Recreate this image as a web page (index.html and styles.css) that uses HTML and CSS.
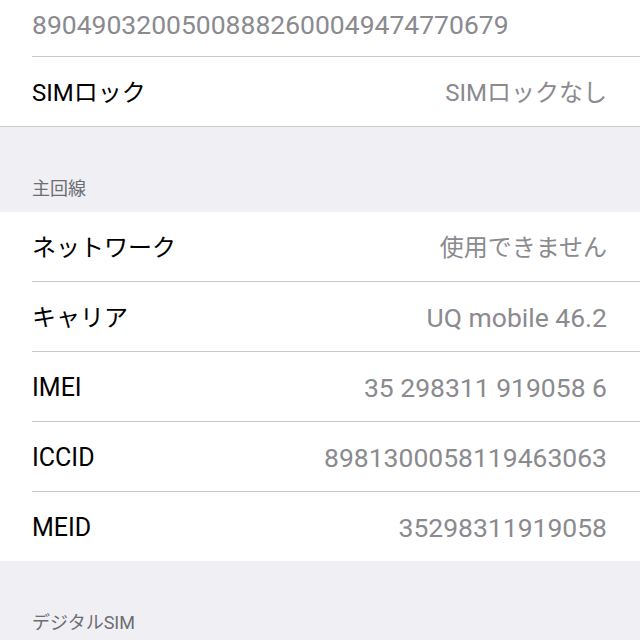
FILE: index.html
```html
<!DOCTYPE html>
<html lang="ja">
<head>
<meta charset="utf-8">
<link rel="stylesheet" href="styles.css">
</head>
<body>
<div class="group group-bordered">
  <div class="row row-eid">
    <span class="value latin mono">89049032005008882600049474770679</span>
  </div>
  <div class="row">
    <span class="label">SIMロック</span>
    <span class="value">SIMロックなし</span>
  </div>
</div>
<div class="header">主回線</div>
<div class="group">
  <div class="row"><span class="label">ネットワーク</span><span class="value">使用できません</span></div>
  <div class="row"><span class="label">キャリア</span><span class="value latin">UQ mobile 46.2</span></div>
  <div class="row"><span class="label latin">IMEI</span><span class="value latin">35 298311 919058 6</span></div>
  <div class="row"><span class="label latin">ICCID</span><span class="value latin mono">8981300058119463063</span></div>
  <div class="row"><span class="label latin">MEID</span><span class="value latin mono">35298311919058</span></div>
</div>
<div class="header">デジタルSIM</div>
</body>
</html>
```
FILE: styles.css
```css
html, body {
  margin: 0;
  padding: 0;
}
body {
  background: #efeff4;
  font-family: Roboto, "Noto Sans CJK JP", sans-serif;
  font-size: 24px;
  color: #000;
}
.group {
  background: #fff;
}
.group-bordered {
  border-bottom: 1px solid #c8c7cc;
}
.row {
  margin-left: 32px;
  padding: 3px 33px 0 0;
  height: 66px;
  display: flex;
  align-items: center;
  justify-content: space-between;
  border-bottom: 1px solid #c8c7cc;
}
.row:last-child {
  border-bottom: none;
}
.row-eid {
  height: 56px;
  padding-top: 0;
  align-items: flex-start;
}
.row-eid .value {
  margin-top: 10px;
}
.label {
  color: #000;
  white-space: nowrap;
  line-height: 30px;
}
.label.latin {
  font-size: 25px;
}
.value {
  color: #8a8a8f;
  white-space: nowrap;
  line-height: 30px;
}
.value.latin {
  font-size: 26.5px;
}
.mono {
  font-variant-numeric: tabular-nums;
}
.header {
  height: 85px;
  box-sizing: border-box;
  padding: 50px 32px 11px;
  font-size: 18px;
  line-height: 24px;
  color: #6d6d72;
}
```
